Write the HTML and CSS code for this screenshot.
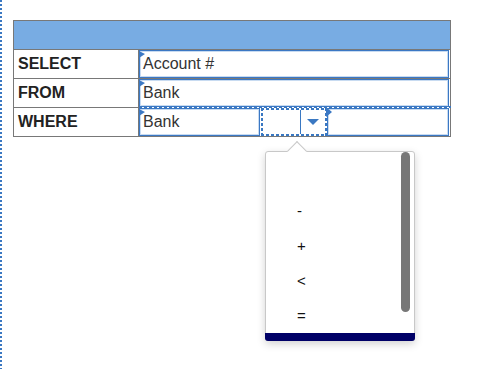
FILE: index.html
```html
<!DOCTYPE html>
<html>
<head>
<meta charset="utf-8">
<link rel="stylesheet" href="styles.css">
</head>
<body>
<div class="page">
  <div class="qtable">
    <div class="qhead"></div>
    <div class="qrow">
      <div class="qlabel">SELECT</div>
      <div class="qvalue">
        <div class="field"><span class="mark"></span>Account #</div>
      </div>
    </div>
    <div class="qrow">
      <div class="qlabel">FROM</div>
      <div class="qvalue">
        <div class="field"><span class="mark"></span>Bank</div>
      </div>
    </div>
    <div class="qrow">
      <div class="qlabel">WHERE</div>
      <div class="qvalue qvalue-active">
        <div class="field field-left"><span class="mark"></span>Bank</div>
        <div class="opselect">
          <div class="opvalue"></div>
          <div class="opbtn"><span class="caret"></span></div>
          <div class="popup">
            <span class="notch"></span>
            <ul class="oplist">
              <li>-</li>
              <li>+</li>
              <li>&lt;</li>
              <li>=</li>
            </ul>
            <span class="thumb"></span>
            <div class="popbar"></div>
          </div>
        </div>
        <div class="field field-right"><span class="mark mark-lg"></span></div>
      </div>
    </div>
  </div>
</div>
</body>
</html>
```
FILE: styles.css
```css
* { box-sizing: border-box; }
body {
  margin: 0;
  font-family: "Liberation Sans", Arial, sans-serif;
  background: #fff;
}
.page {
  position: relative;
  height: 369px;
  padding: 20px 0 0 13px;
  background-image: repeating-linear-gradient(to bottom, #3a78c2 0 2px, transparent 2px 4px);
  background-size: 2px 100%;
  background-repeat: no-repeat;
}
.qtable {
  width: 438px;
  border: 1px solid #787878;
}
.qhead {
  height: 28px;
  background: #78ace3;
}
.qrow {
  display: flex;
  height: 29px;
}
.qlabel {
  width: 125px;
  border-top: 1px solid #787878;
  border-right: 1px solid #787878;
  padding-left: 4px;
  font-weight: bold;
  font-size: 16px;
  line-height: 27px;
  color: #222;
}
.qvalue {
  flex: 1;
  display: flex;
  border-top: 1px solid #787878;
  padding-right: 1px;
}
.qvalue-active {
  border-top: 2px solid transparent;
  margin-top: -1px;
  margin-right: -1px;
  padding-right: 2px;
  background: repeating-linear-gradient(to right, #3a78c2 0 3px, transparent 3px 5px) top left / 100% 2px no-repeat;
  background-origin: border-box;
}
.field {
  flex: 1;
  position: relative;
  border: 1px solid #3b78c4;
  box-shadow: inset 0 0 0 1px #c8dbf1;
  padding-left: 3px;
  font-size: 16px;
  line-height: 25px;
  color: #333;
  background: #fff;
}
.field-left { flex: 0 0 121px; }
.mark {
  position: absolute;
  left: -1px;
  top: 0;
  width: 0;
  height: 0;
  border-left: 6px solid #3b78c4;
  border-top: 3px solid transparent;
  border-bottom: 4px solid transparent;
}
.mark-lg {
  left: -2px;
  top: -2px;
  border-left: 6px solid #3b78c4;
  border-top: 5px solid transparent;
  border-bottom: 5px solid transparent;
}
.opselect {
  flex: 0 0 66px;
  margin-left: 1px;
  position: relative;
  display: flex;
  border: 2px solid transparent;
  background:
    repeating-linear-gradient(to right, #3a78c2 0 3px, transparent 3px 5px) top left / 100% 2px no-repeat,
    repeating-linear-gradient(to right, #3a78c2 0 3px, transparent 3px 5px) bottom left / 100% 2px no-repeat,
    repeating-linear-gradient(to bottom, #3a78c2 0 3px, transparent 3px 5px) top left / 2px 100% no-repeat,
    repeating-linear-gradient(to bottom, #3a78c2 0 3px, transparent 3px 5px) top right / 2px 100% no-repeat;
  background-origin: border-box;
}
.opvalue {
  width: 38px;
  border-right: 1px solid #3a78c2;
}
.opbtn {
  flex: 1;
  display: flex;
  align-items: center;
  justify-content: center;
}
.caret {
  width: 0;
  height: 0;
  border-left: 6px solid transparent;
  border-right: 6px solid transparent;
  border-top: 6px solid #3a78c2;
}
.popup {
  position: absolute;
  left: 2px;
  top: 41px;
  z-index: 2;
  width: 150px;
  height: 190px;
  display: flex;
  flex-direction: column;
  background: #fff;
  border: 1px solid #c8c8c8;
  border-radius: 3px;
  box-shadow: 0 3px 8px rgba(0, 0, 0, 0.18);
}
.notch {
  position: absolute;
  left: 24px;
  top: -8px;
  width: 14px;
  height: 14px;
  background: #fff;
  border-top: 1px solid #c8c8c8;
  border-left: 1px solid #c8c8c8;
  transform: rotate(45deg);
}
.oplist {
  flex: 1;
  overflow: hidden;
  list-style: none;
  margin: 0;
  padding: 41px 0 0 31px;
  font-size: 15px;
  line-height: 35px;
  color: #111;
}
.thumb {
  position: absolute;
  right: 4px;
  top: 0;
  width: 9px;
  height: 160px;
  border-radius: 5px;
  background: #777;
}
.popbar {
  height: 8px;
  margin: 0 -1px -1px;
  background: #000066;
  border-radius: 0 0 3px 3px;
}
```
